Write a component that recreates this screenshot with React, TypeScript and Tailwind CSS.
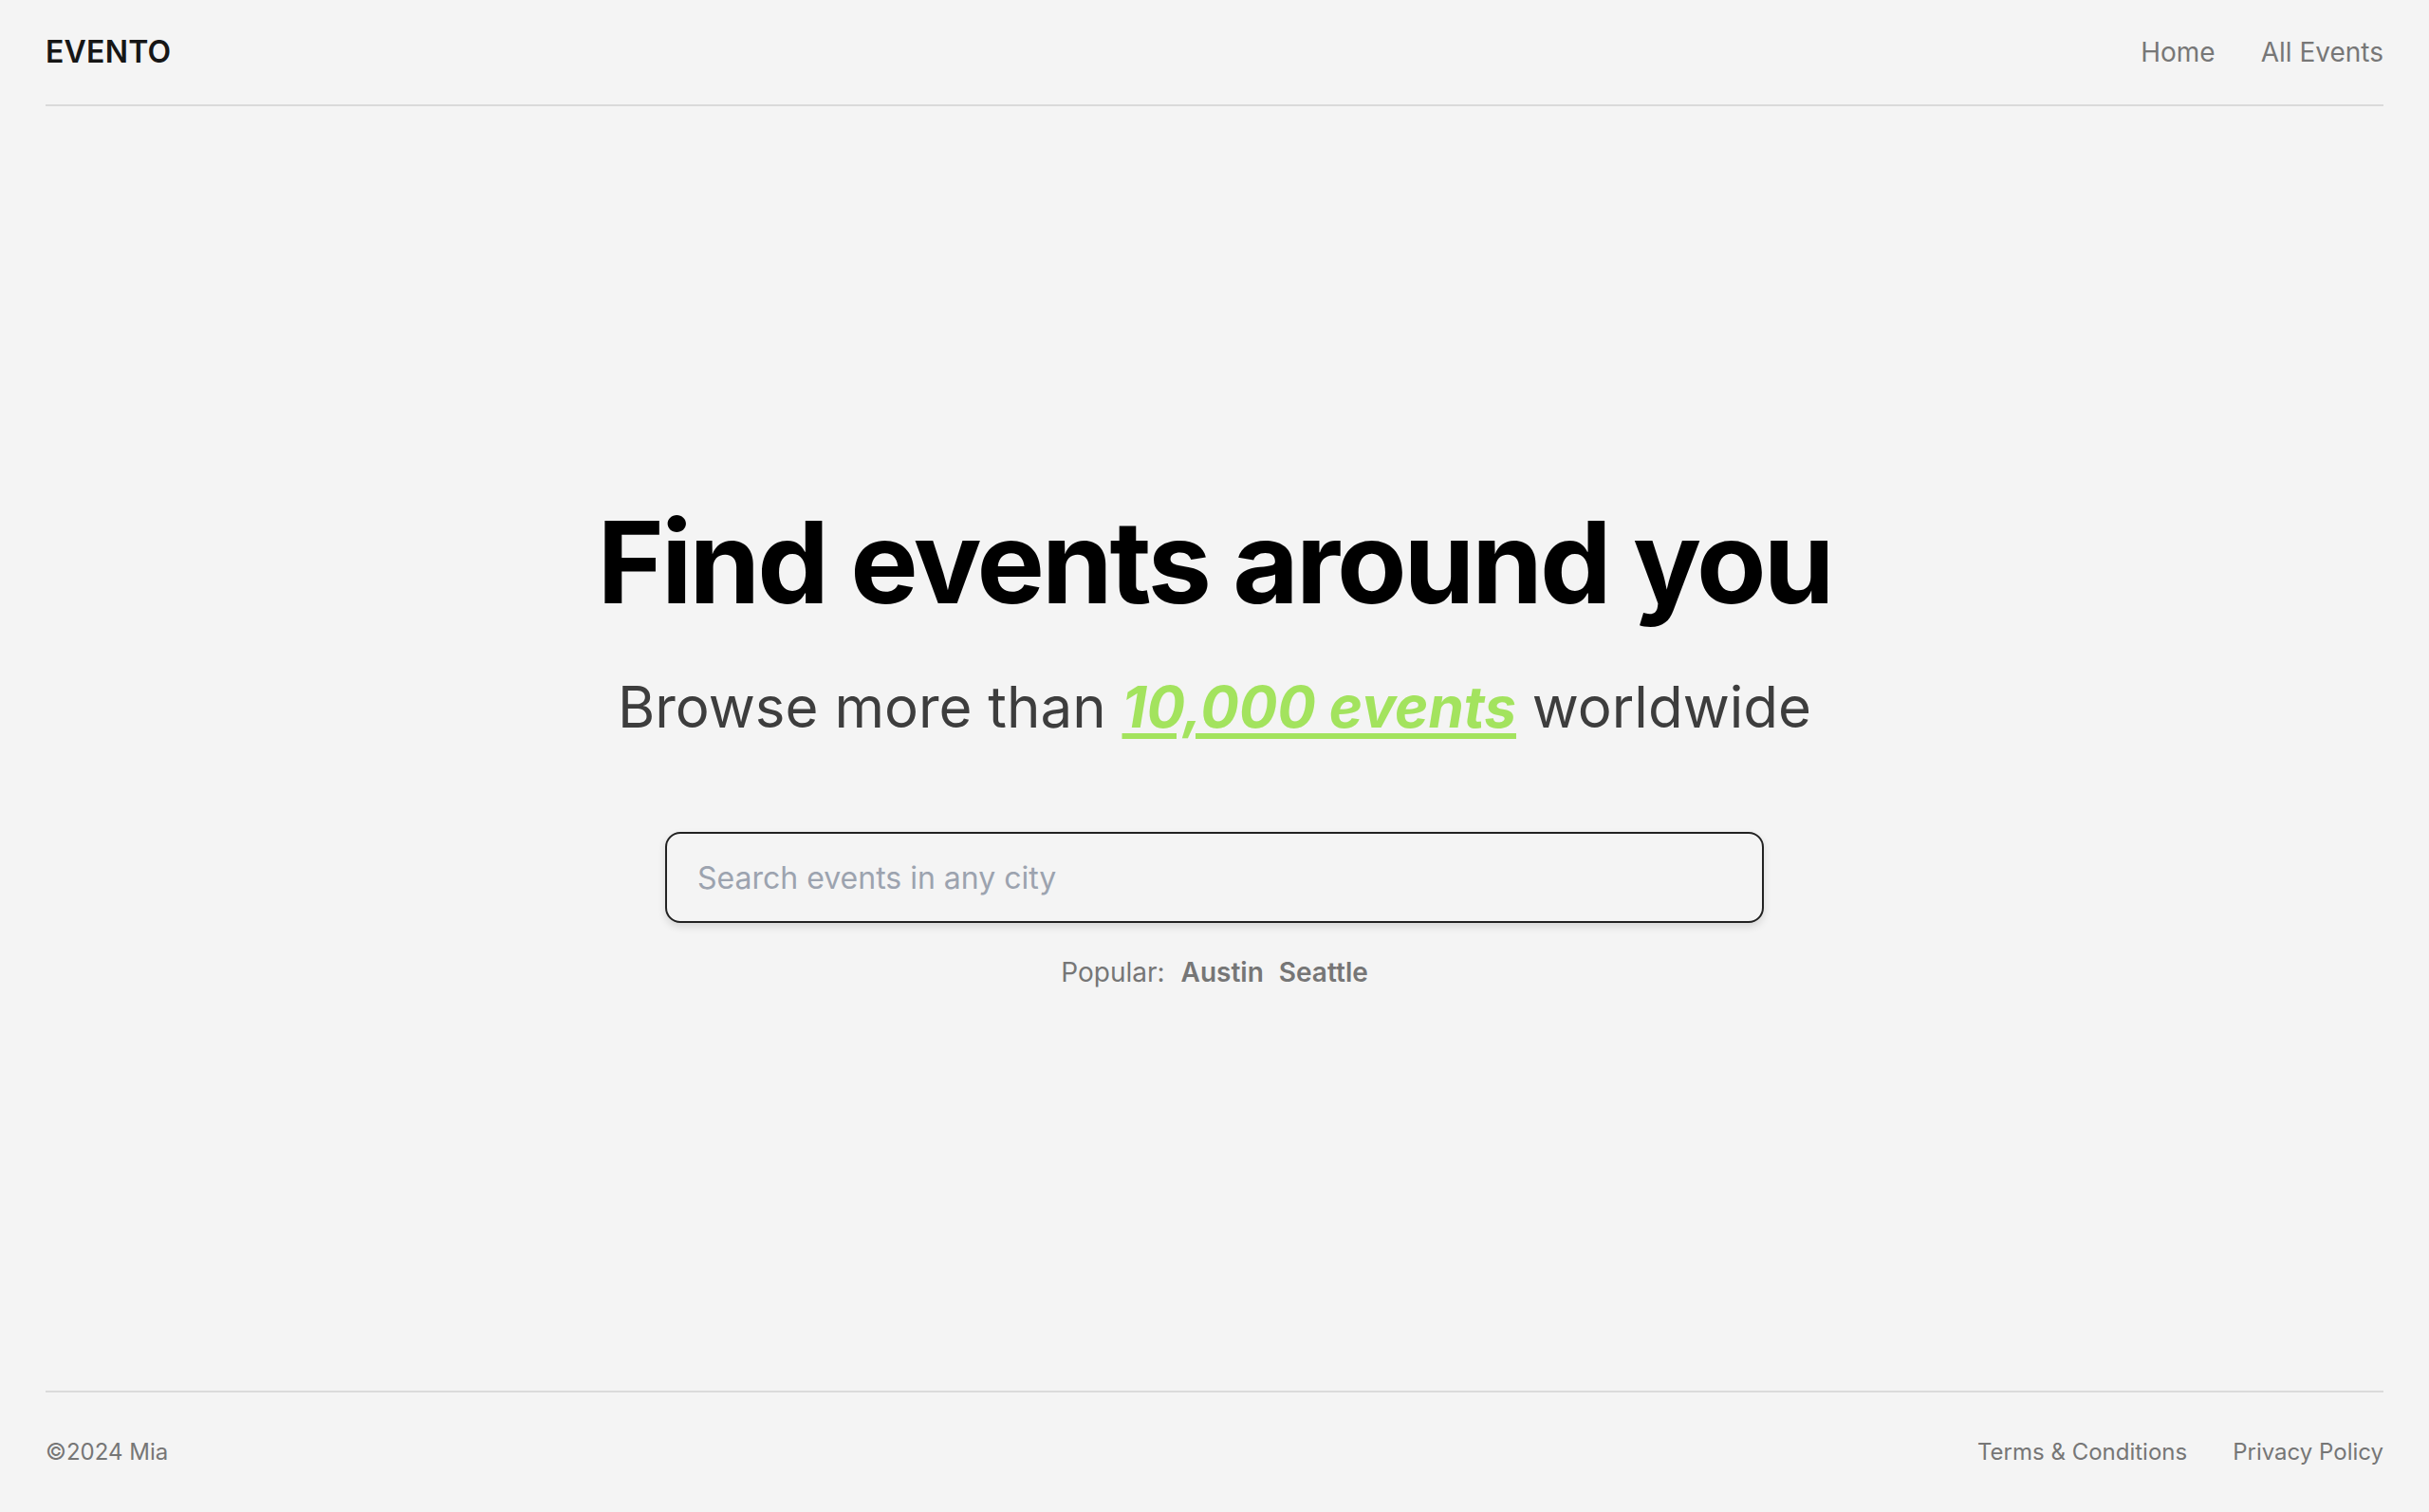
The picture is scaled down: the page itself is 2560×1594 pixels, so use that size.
import React from "react";

export default function App() {
  return (
    <div
      className="flex min-h-[1594px] flex-col bg-[#f4f4f4] px-[48px] text-[#171717]"
      style={{ fontFamily: "Inter, 'Noto Sans', sans-serif" }}
    >
      <header className="flex h-[112px] shrink-0 items-center justify-between border-b-2 border-[#dadada]">
        <span className="text-[32px] font-semibold tracking-[0.2px] text-[#161616]">EVENTO</span>
        <nav className="flex gap-[48px] text-[28px] text-[#777777]">
          <a>Home</a>
          <a>All Events</a>
        </nav>
      </header>

      <main className="flex flex-1 flex-col items-center justify-center">
        <h1 className="text-[120px] leading-[120px] font-bold tracking-[-3px] text-black">
          Find events around you
        </h1>
        <p className="mt-[56px] text-[60px] leading-[72px] text-[#3d3d3d] tracking-[0px]">
          Browse more than{" "}
          <span className="font-bold italic text-[#a3e35e] underline decoration-[6px] underline-offset-[6px]">
            10,000 events
          </span>{" "}
          worldwide
        </p>
        <div className="mt-[96px] w-[1158px]">
          <input
            className="h-[96px] w-full rounded-[16px] border-[2.5px] border-[#222222] bg-[#f4f4f4] px-[32px] text-[32px] text-[#222] shadow-[0_4px_8px_rgba(0,0,0,0.12)] outline-none placeholder:text-[#9ca3af]"
            placeholder="Search events in any city"
          />
        </div>
        <div className="mt-[32px] flex items-center gap-[17px] text-[28px] leading-[40px] text-[#767676]">
          <span>Popular:</span>
          <div className="flex gap-[16px] font-semibold">
            <a>Austin</a>
            <a>Seattle</a>
          </div>
        </div>
      </main>

      <footer className="flex h-[128px] shrink-0 items-center justify-between border-t-2 border-[#dadada] text-[24px] text-[#767676]">
        <span>©2024 Mia</span>
        <div className="flex gap-[48px]">
          <a>Terms &amp; Conditions</a>
          <a>Privacy Policy</a>
        </div>
      </footer>
    </div>
  );
}
